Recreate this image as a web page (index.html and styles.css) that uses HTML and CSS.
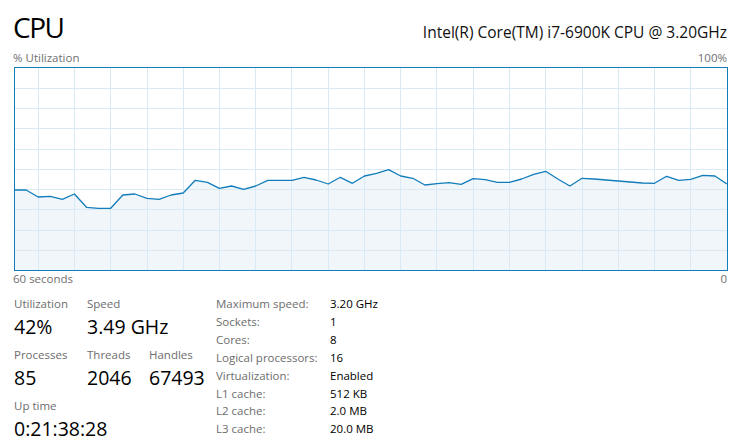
FILE: index.html
```html
<!DOCTYPE html>
<html lang="en">
<head>
<meta charset="utf-8">
<title>CPU</title>
<link rel="stylesheet" href="styles.css">
</head>
<body>
<div class="app">
  <header class="head">
    <h1 class="title">CPU</h1>
    <div class="model">Intel(R) Core(TM) i7-6900K CPU @ 3.20GHz</div>
  </header>
  <div class="axis"><span>% Utilization</span><span>100%</span></div>
  <div class="graph">
    <svg class="chart" width="712" height="202" viewBox="15 68 712 202" xmlns="http://www.w3.org/2000/svg">
      <polygon class="area" points="14,190 26.1,190 38.2,197 50.3,196.3 62.3,199.3 74.4,194 86.5,207.3 98.6,208.3 110.7,208.3 122.8,195 134.9,194 146.9,198.3 159,199.3 171.1,195 183.2,193 195.3,180.3 207.4,182.3 219.4,188.3 231.5,186 243.6,189.3 255.7,186 267.8,180.3 279.9,180.3 292,180.3 304,177.3 316.1,180 328.2,184 340.3,177.3 352.4,183.3 364.5,176 376.6,173.3 388.6,169.7 400.7,176 412.8,178.3 424.9,185 437,183.7 449.1,182.7 461.1,184.3 473.2,178.7 485.3,179.7 497.4,182.3 509.5,182.3 521.6,179 533.7,174.3 545.7,171.3 557.8,179 569.9,186 582,178.3 594.1,179 606.2,180 618.3,181 630.3,182 642.4,183 654.5,183.3 666.6,176.3 678.7,180.3 690.8,179.3 702.8,175.3 714.9,176 727,184 727,270 14,270"/>
      <g class="grid">
        <line x1="15" x2="727" y1="88.5" y2="88.5"/>
        <line x1="15" x2="727" y1="108.5" y2="108.5"/>
        <line x1="15" x2="727" y1="128.5" y2="128.5"/>
        <line x1="15" x2="727" y1="149.5" y2="149.5"/>
        <line x1="15" x2="727" y1="169.5" y2="169.5"/>
        <line x1="15" x2="727" y1="189.5" y2="189.5"/>
        <line x1="15" x2="727" y1="209.5" y2="209.5"/>
        <line x1="15" x2="727" y1="230.5" y2="230.5"/>
        <line x1="15" x2="727" y1="250.5" y2="250.5"/>
        <line y1="68" y2="270" x1="38.5" x2="38.5"/>
        <line y1="68" y2="270" x1="74.5" x2="74.5"/>
        <line y1="68" y2="270" x1="110.5" x2="110.5"/>
        <line y1="68" y2="270" x1="147.5" x2="147.5"/>
        <line y1="68" y2="270" x1="183.5" x2="183.5"/>
        <line y1="68" y2="270" x1="219.5" x2="219.5"/>
        <line y1="68" y2="270" x1="255.5" x2="255.5"/>
        <line y1="68" y2="270" x1="291.5" x2="291.5"/>
        <line y1="68" y2="270" x1="328.5" x2="328.5"/>
        <line y1="68" y2="270" x1="364.5" x2="364.5"/>
        <line y1="68" y2="270" x1="400.5" x2="400.5"/>
        <line y1="68" y2="270" x1="436.5" x2="436.5"/>
        <line y1="68" y2="270" x1="473.5" x2="473.5"/>
        <line y1="68" y2="270" x1="509.5" x2="509.5"/>
        <line y1="68" y2="270" x1="545.5" x2="545.5"/>
        <line y1="68" y2="270" x1="582.5" x2="582.5"/>
        <line y1="68" y2="270" x1="618.5" x2="618.5"/>
        <line y1="68" y2="270" x1="654.5" x2="654.5"/>
        <line y1="68" y2="270" x1="690.5" x2="690.5"/>
      </g>
      <polyline class="line" points="14,190 26.1,190 38.2,197 50.3,196.3 62.3,199.3 74.4,194 86.5,207.3 98.6,208.3 110.7,208.3 122.8,195 134.9,194 146.9,198.3 159,199.3 171.1,195 183.2,193 195.3,180.3 207.4,182.3 219.4,188.3 231.5,186 243.6,189.3 255.7,186 267.8,180.3 279.9,180.3 292,180.3 304,177.3 316.1,180 328.2,184 340.3,177.3 352.4,183.3 364.5,176 376.6,173.3 388.6,169.7 400.7,176 412.8,178.3 424.9,185 437,183.7 449.1,182.7 461.1,184.3 473.2,178.7 485.3,179.7 497.4,182.3 509.5,182.3 521.6,179 533.7,174.3 545.7,171.3 557.8,179 569.9,186 582,178.3 594.1,179 606.2,180 618.3,181 630.3,182 642.4,183 654.5,183.3 666.6,176.3 678.7,180.3 690.8,179.3 702.8,175.3 714.9,176 727,184"/>
    </svg>
  </div>
  <div class="axis axis-bottom"><span>60 seconds</span><span>0</span></div>

  <section class="stats">
    <div class="dyn">
      <div class="stat"><div class="label">Utilization</div><div class="value">42%</div></div>
      <div class="stat span2"><div class="label">Speed</div><div class="value">3.49 GHz</div></div>
      <div class="stat"><div class="label">Processes</div><div class="value">85</div></div>
      <div class="stat"><div class="label">Threads</div><div class="value">2046</div></div>
      <div class="stat"><div class="label">Handles</div><div class="value">67493</div></div>
      <div class="stat span3"><div class="label">Up time</div><div class="value">0:21:38:28</div></div>
    </div>
    <dl class="static">
      <dt>Maximum speed:</dt><dd>3.20 GHz</dd>
      <dt>Sockets:</dt><dd>1</dd>
      <dt>Cores:</dt><dd>8</dd>
      <dt>Logical processors:</dt><dd>16</dd>
      <dt>Virtualization:</dt><dd>Enabled</dd>
      <dt>L1 cache:</dt><dd>512 KB</dd>
      <dt>L2 cache:</dt><dd>2.0 MB</dd>
      <dt>L3 cache:</dt><dd>20.0 MB</dd>
    </dl>
  </section>
</div>
</body>
</html>
```

FILE: styles.css
```css
* { box-sizing: border-box; }
html, body { margin: 0; padding: 0; background: #ffffff; }
body {
  font-family: "Segoe UI", "Open Sans", "Noto Sans", sans-serif;
  color: #000000;
  width: 741px;
  height: 447px;
  overflow: hidden;
}
.app {
  padding: 9px 14px 0 13px;
}
.head {
  display: flex;
  justify-content: space-between;
  align-items: baseline;
  height: 36px;
}
.title {
  margin: 0;
  font-size: 28px;
  font-weight: 400;
  line-height: 36px;
  letter-spacing: -1.5px;
}
.model {
  font-size: 15.5px;
  line-height: 20px;
  color: #111111;
}
.axis {
  display: flex;
  justify-content: space-between;
  margin-top: 5px;
  font-size: 11.5px;
  line-height: 16px;
  color: #707070;
}
.axis-bottom { margin-top: 0; }
.graph {
  margin-top: 1px;
  margin-left: 1px;
  width: 714px;
  height: 204px;
  border: 1px solid #117dbb;
}
.chart { display: block; }
.area { fill: #f1f6fa; }
.grid line { stroke: #d9eaf4; stroke-width: 1; }
.line { fill: none; stroke: #117dbb; stroke-width: 1.3; stroke-linejoin: round; }

.stats {
  display: flex;
  margin-top: 9px;
  margin-left: 1px;
}
.dyn {
  display: grid;
  grid-template-columns: 73px 62px 67px;
  row-gap: 6px;
  align-content: start;
}
.span2 { grid-column: span 2; }
.span3 { grid-column: span 3; }
.label {
  font-size: 11.5px;
  line-height: 16px;
  color: #6d6d6d;
}
.value {
  font-size: 19.5px;
  line-height: 29px;
  color: #000000;
  white-space: nowrap;
}
.static {
  margin: 0;
  display: grid;
  grid-template-columns: 114px auto;
  font-size: 11.5px;
  line-height: 17.9px;
  align-content: start;
  margin-top: -1px;
}
.static dt { color: #6d6d6d; }
.static dd { margin: 0; color: #000000; }
```
